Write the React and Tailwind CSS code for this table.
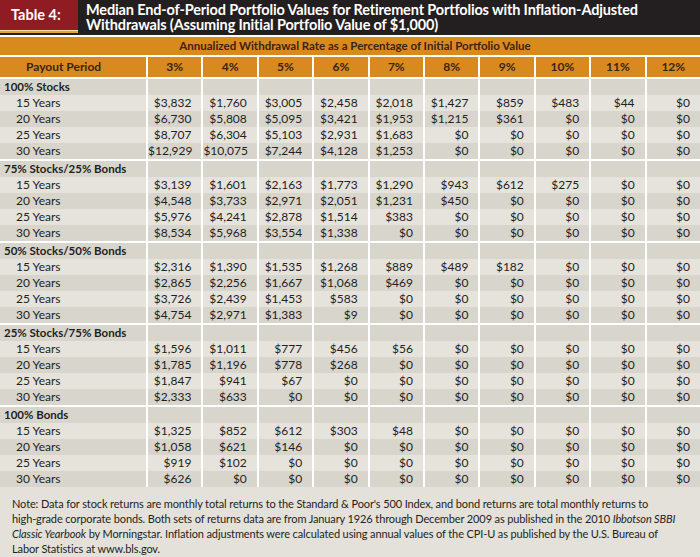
import React from 'react';

const rates = ['3%', '4%', '5%', '6%', '7%', '8%', '9%', '10%', '11%', '12%'];

const groups = [
  {
    name: '100% Stocks',
    rows: [
      ['15 Years', '$3,832', '$1,760', '$3,005', '$2,458', '$2,018', '$1,427', '$859', '$483', '$44', '$0'],
      ['20 Years', '$6,730', '$5,808', '$5,095', '$3,421', '$1,953', '$1,215', '$361', '$0', '$0', '$0'],
      ['25 Years', '$8,707', '$6,304', '$5,103', '$2,931', '$1,683', '$0', '$0', '$0', '$0', '$0'],
      ['30 Years', '$12,929', '$10,075', '$7,244', '$4,128', '$1,253', '$0', '$0', '$0', '$0', '$0'],
    ],
  },
  {
    name: '75% Stocks/25% Bonds',
    rows: [
      ['15 Years', '$3,139', '$1,601', '$2,163', '$1,773', '$1,290', '$943', '$612', '$275', '$0', '$0'],
      ['20 Years', '$4,548', '$3,733', '$2,971', '$2,051', '$1,231', '$450', '$0', '$0', '$0', '$0'],
      ['25 Years', '$5,976', '$4,241', '$2,878', '$1,514', '$383', '$0', '$0', '$0', '$0', '$0'],
      ['30 Years', '$8,534', '$5,968', '$3,554', '$1,338', '$0', '$0', '$0', '$0', '$0', '$0'],
    ],
  },
  {
    name: '50% Stocks/50% Bonds',
    rows: [
      ['15 Years', '$2,316', '$1,390', '$1,535', '$1,268', '$889', '$489', '$182', '$0', '$0', '$0'],
      ['20 Years', '$2,865', '$2,256', '$1,667', '$1,068', '$469', '$0', '$0', '$0', '$0', '$0'],
      ['25 Years', '$3,726', '$2,439', '$1,453', '$583', '$0', '$0', '$0', '$0', '$0', '$0'],
      ['30 Years', '$4,754', '$2,971', '$1,383', '$9', '$0', '$0', '$0', '$0', '$0', '$0'],
    ],
  },
  {
    name: '25% Stocks/75% Bonds',
    rows: [
      ['15 Years', '$1,596', '$1,011', '$777', '$456', '$56', '$0', '$0', '$0', '$0', '$0'],
      ['20 Years', '$1,785', '$1,196', '$778', '$268', '$0', '$0', '$0', '$0', '$0', '$0'],
      ['25 Years', '$1,847', '$941', '$67', '$0', '$0', '$0', '$0', '$0', '$0', '$0'],
      ['30 Years', '$2,333', '$633', '$0', '$0', '$0', '$0', '$0', '$0', '$0', '$0'],
    ],
  },
  {
    name: '100% Bonds',
    rows: [
      ['15 Years', '$1,325', '$852', '$612', '$303', '$48', '$0', '$0', '$0', '$0', '$0'],
      ['20 Years', '$1,058', '$621', '$146', '$0', '$0', '$0', '$0', '$0', '$0', '$0'],
      ['25 Years', '$919', '$102', '$0', '$0', '$0', '$0', '$0', '$0', '$0', '$0'],
      ['30 Years', '$626', '$0', '$0', '$0', '$0', '$0', '$0', '$0', '$0', '$0'],
    ],
  },
];

const cols = 'grid grid-cols-[146px_repeat(10,minmax(0,1fr))] gap-x-[2px]';

function Row({ cells, dark }) {
  const bg = dark ? 'bg-[#d8d5cd]' : 'bg-[#e6e3dc]';
  return (
    <div className={`${cols} h-[16px]`}>
      <div className={`${bg} pl-[16px] leading-[16px]`}>{cells[0]}</div>
      {cells.slice(1).map((v, i) => (
        <div key={i} className={`${bg} pr-[10px] text-right leading-[16px]`}>{v}</div>
      ))}
    </div>
  );
}

export default function App() {
  return (
    <div className="w-[700px] h-[557px] bg-[#e4e1da] text-[#231f20] font-['Lato',sans-serif] text-[12px] overflow-hidden">
      {/* title bar */}
      <div className="flex h-[35px] bg-[#231f20]">
        <div className="w-[78px] shrink-0">
          <div className="h-[30px] bg-[#8f1c23] flex items-center pl-[11px] text-white font-bold text-[14.5px]">
            Table 4:
          </div>
          <div className="h-[1px] bg-[#f3dfb0]" />
          <div className="h-[2px] bg-[#e9a32a]" />
        </div>
        <div className="pl-[8px] pt-[3px] text-white font-bold text-[14.5px] leading-[14.5px] tracking-[-0.15px]">
          Median End-of-Period Portfolio Values for Retirement Portfolios with Inflation-Adjusted
          <br />
          Withdrawals (Assuming Initial Portfolio Value of $1,000)
        </div>
      </div>

      <div className="h-[2px] bg-white" />
      <div className="h-[18px] bg-[#d98a1f] pl-[10px] text-center text-[#3b2413] font-bold text-[11.5px] leading-[18px]">
        Annualized Withdrawal Rate as a Percentage of Initial Portfolio Value
      </div>
      <div className="h-[2px] bg-white" />

      <div className="bg-white">
        <div className={`${cols} h-[20px] text-[#3b2413] font-bold text-[12px] leading-[20px]`}>
          <div className="bg-[#d98a1f] pl-[26px]">Payout Period</div>
          {rates.map((r) => (
            <div key={r} className="bg-[#d98a1f] text-center">{r}</div>
          ))}
        </div>

        {groups.map((g) => (
          <div key={g.name} className="mt-[2px]">
            <div className={`${cols} h-[16px]`}>
              <div className="bg-[#d8d5cd] pl-[4px] font-bold text-[11.5px] leading-[16px]">{g.name}</div>
              {rates.map((r) => (
                <div key={r} className="bg-[#d8d5cd]" />
              ))}
            </div>
            {g.rows.map((row, ri) => (
              <Row key={ri} cells={row} dark={ri % 2 === 1} />
            ))}
          </div>
        ))}
      </div>

      <p className="px-[12px] pt-[9px] text-[11px] leading-[15px] tracking-[-0.12px] whitespace-nowrap">
        Note: Data for stock returns are monthly total returns to the Standard &amp; Poor's 500 Index, and bond returns are total monthly returns to
        <br />
        high-grade corporate bonds. Both sets of returns data are from January 1926 through December 2009 as published in the 2010 <i>Ibbotson SBBI</i>
        <br />
        <i>Classic Yearbook</i> by Morningstar. Inflation adjustments were calculated using annual values of the CPI-U as published by the U.S. Bureau of
        <br />
        Labor Statistics at www.bls.gov.
      </p>
    </div>
  );
}
